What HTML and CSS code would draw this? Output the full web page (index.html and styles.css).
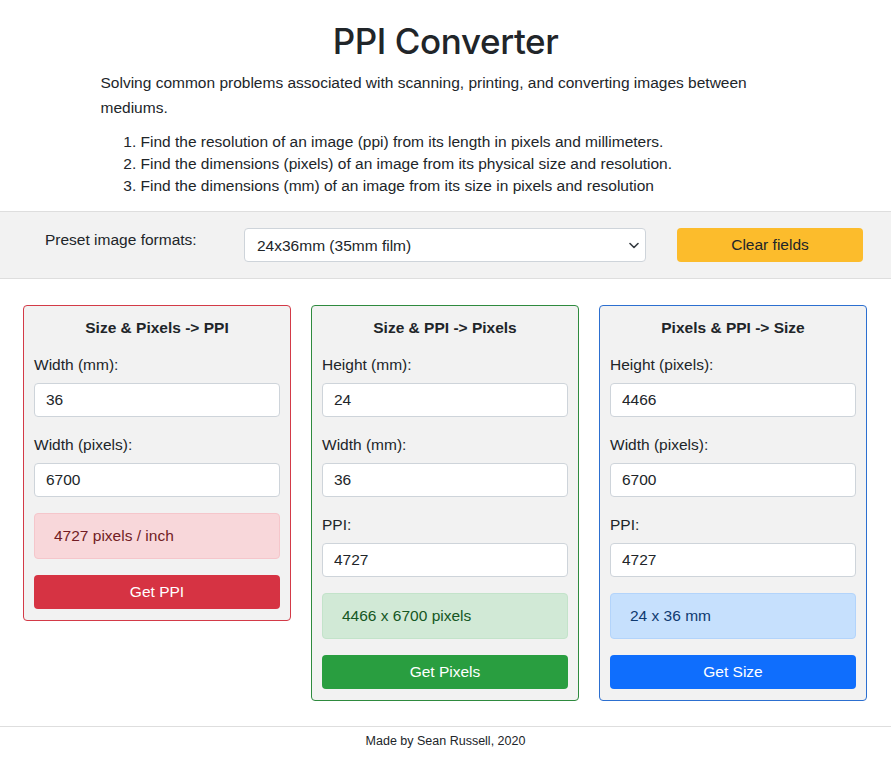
FILE: index.html
```html
<!DOCTYPE html>
<html lang="en">
<head>
<meta charset="utf-8">
<title>PPI Converter</title>
<link rel="stylesheet" href="styles.css">
</head>
<body>
<header class="intro">
  <h1 class="title">PPI Converter</h1>
  <p class="lead">Solving common problems associated with scanning, printing, and converting images between mediums.</p>
  <ol class="goals">
    <li>Find the resolution of an image (ppi) from its length in pixels and millimeters.</li>
    <li>Find the dimensions (pixels) of an image from its physical size and resolution.</li>
    <li>Find the dimensions (mm) of an image from its size in pixels and resolution</li>
  </ol>
</header>

<section class="toolbar">
  <label class="toolbar-label" for="preset">Preset image formats:</label>
  <div class="select-wrap">
    <select id="preset" class="select">
      <option>24x36mm (35mm film)</option>
    </select>
    <svg class="chevron" width="10" height="7" viewBox="0 0 10 7"><path d="M1 1.5l4 4 4-4" fill="none" stroke="#343a40" stroke-width="1.6" stroke-linecap="round" stroke-linejoin="round"/></svg>
  </div>
  <button class="btn btn-warning">Clear fields</button>
</section>

<main class="cards">
  <div class="card card-red">
    <h2 class="card-title">Size &amp; Pixels -&gt; PPI</h2>
    <label class="field-label">Width (mm):</label>
    <input class="input" value="36">
    <label class="field-label">Width (pixels):</label>
    <input class="input" value="6700">
    <div class="alert alert-red">4727 pixels / inch</div>
    <button class="btn btn-red">Get PPI</button>
  </div>
  <div class="card card-green">
    <h2 class="card-title">Size &amp; PPI -&gt; Pixels</h2>
    <label class="field-label">Height (mm):</label>
    <input class="input" value="24">
    <label class="field-label">Width (mm):</label>
    <input class="input" value="36">
    <label class="field-label">PPI:</label>
    <input class="input" value="4727">
    <div class="alert alert-green">4466 x 6700 pixels</div>
    <button class="btn btn-green">Get Pixels</button>
  </div>
  <div class="card card-blue">
    <h2 class="card-title">Pixels &amp; PPI -&gt; Size</h2>
    <label class="field-label">Height (pixels):</label>
    <input class="input" value="4466">
    <label class="field-label">Width (pixels):</label>
    <input class="input" value="6700">
    <label class="field-label">PPI:</label>
    <input class="input" value="4727">
    <div class="alert alert-blue">24 x 36 mm</div>
    <button class="btn btn-blue">Get Size</button>
  </div>
</main>

<footer class="footer">Made by Sean Russell, 2020</footer>
</body>
</html>
```

FILE: styles.css
```css
* { box-sizing: border-box; }

body {
  margin: 0;
  font-family: "Liberation Sans", Arial, sans-serif;
  font-size: 15.5px;
  color: #212529;
  background: #fff;
}

.intro {
  width: 720px;
  margin: 0 auto;
  padding: 20px 12px 0;
}

.title {
  margin: 0 0 7px;
  text-align: center;
  font-family: Inter, "Liberation Sans", sans-serif;
  font-weight: 500;
  font-size: 35px;
  line-height: 43px;
  letter-spacing: -0.4px;
}

.lead {
  margin: 0 0 11px;
  padding-left: 3px;
  font-size: 15.5px;
  line-height: 25px;
}

.goals {
  margin: 0 0 14px;
  padding-left: 43px;
  font-size: 15.5px;
  line-height: 22px;
}

.toolbar {
  display: flex;
  align-items: flex-start;
  padding: 16px 28px 16px 45px;
  background: #f2f2f2;
  border-top: 1px solid #dedede;
  border-bottom: 1px solid #dedede;
}

.toolbar-label {
  width: 199px;
  padding-top: 1px;
  font-size: 15.5px;
  line-height: 22px;
}

.select-wrap {
  position: relative;
  flex: 1;
  margin-right: 31px;
}

.select {
  display: block;
  width: 100%;
  height: 34px;
  padding: 0 30px 0 12px;
  font-family: "Liberation Sans", Arial, sans-serif;
  font-size: 15.5px;
  color: #212529;
  background: #fff;
  border: 1px solid #ced4da;
  border-radius: 4px;
  appearance: none;
  -webkit-appearance: none;
}

.chevron {
  position: absolute;
  right: 7px;
  top: 14px;
}

.btn {
  display: block;
  height: 34px;
  border: 0;
  border-radius: 4px;
  font-family: "Liberation Sans", Arial, sans-serif;
  font-size: 15.5px;
  color: #fff;
  cursor: pointer;
}

.btn-warning {
  width: 186px;
  background: #fcbc2c;
  color: #212529;
}

.cards {
  display: grid;
  grid-template-columns: repeat(3, 268px);
  column-gap: 20px;
  align-items: start;
  padding: 26px 24px 0 23px;
}

.card {
  display: flex;
  flex-direction: column;
  padding: 10px 10px 11px;
  background: #f2f2f2;
  border: 1px solid;
  border-radius: 4px;
}

.card-red { border-color: #d33a47; }
.card-green { border-color: #2e8a3e; }
.card-blue { border-color: #2c6fd0; }

.card-title {
  margin: 0 0 13px;
  text-align: center;
  font-size: 15.5px;
  line-height: 24px;
  font-weight: bold;
}

.field-label {
  font-size: 15.5px;
  line-height: 24px;
  margin-bottom: 6px;
}

.input {
  display: block;
  width: 100%;
  height: 34px;
  margin: 0 0 16px;
  padding: 0 11px;
  font-family: "Liberation Sans", Arial, sans-serif;
  font-size: 15.5px;
  color: #212529;
  background: #fff;
  border: 1px solid #ced4da;
  border-radius: 4px;
}

.alert {
  height: 46px;
  margin-bottom: 16px;
  padding: 0 19px;
  font-size: 15.5px;
  line-height: 44px;
  border: 1px solid;
  border-radius: 4px;
}

.alert-red { background: #f8d7da; border-color: #f5c6cb; color: #721c24; }
.alert-green { background: #d1e9d6; border-color: #c3e3ca; color: #155724; }
.alert-blue { background: #c6e0fd; border-color: #b3d4fb; color: #0f3a70; }

.btn-red { background: #d63343; }
.btn-green { background: #299e40; }
.btn-blue { background: #0f6efd; }

.footer {
  margin-top: 25px;
  padding-top: 5px;
  border-top: 1px solid #dedede;
  text-align: center;
  font-size: 12.5px;
  line-height: 18px;
}
```
